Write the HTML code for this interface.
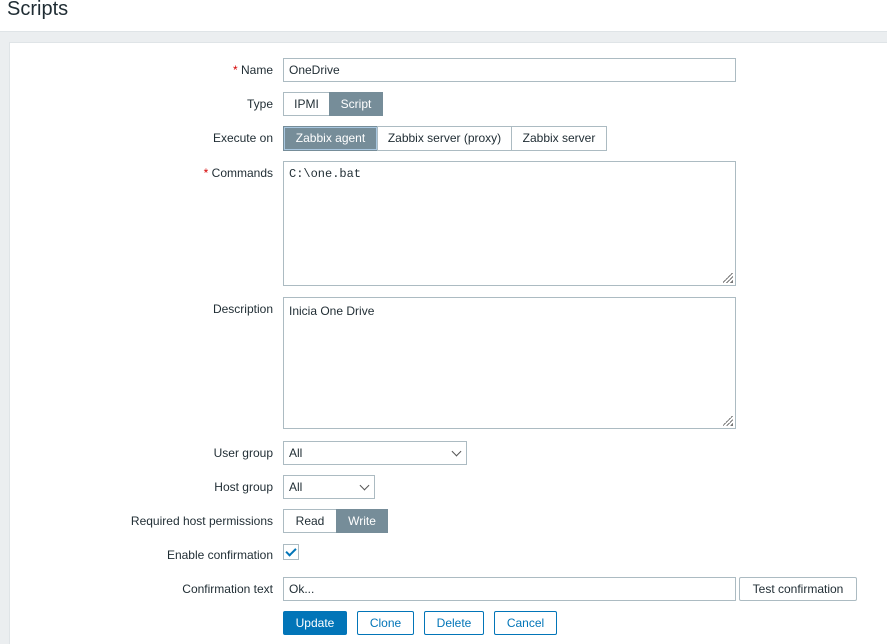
<!DOCTYPE html><html><head><style>
body{margin:0;width:887px;height:644px;background:#ebeef0;font-family:"Liberation Sans",sans-serif;font-size:12px;color:#1f2c33;position:relative;overflow:hidden}
.hdr{position:absolute;left:0;top:0;width:887px;height:31px;background:#fff;border-bottom:1px solid #dfe4e7}
.hdr h1{margin:0;position:absolute;left:7px;top:-2px;font-size:20px;font-weight:normal;color:#1f2c33}
.panel{position:absolute;left:9px;top:42px;right:0;bottom:0;background:#fff;border:1px solid #dfe4e7;border-right:none;border-bottom:none}
.l{position:absolute;right:614px;text-align:right;white-space:nowrap}
.r{color:#d40000}
.in{position:absolute;box-sizing:border-box;border:1px solid #acbbc2;background:#fff;padding:0 5px;white-space:nowrap}
.b{position:absolute;box-sizing:border-box;border:1px solid #acbbc2;background:#fff;text-align:center}
.s{background:#768d99;color:#fff;border-color:#768d99}
.bt{position:absolute;box-sizing:border-box;border:1px solid #0275b8;color:#0275b8;background:#fff;text-align:center;height:24px;line-height:22px;border-radius:2px}
.dd{position:absolute;width:6px;height:6px;border-right:1.3px solid #555;border-bottom:1.3px solid #555;transform:rotate(45deg)}
.rs{position:absolute;right:2px;bottom:2px;width:10px;height:10px;background:linear-gradient(135deg,transparent 45%,#777 45%,#777 52%,transparent 52%,transparent 65%,#777 65%,#777 72%,transparent 72%,transparent 85%,#777 85%)}
</style></head><body>
<div class="hdr"><h1>Scripts</h1></div>
<div class="panel"></div>
<div class="l" style="top:63px"><span class="r">*</span> Name</div>
<div class="in" style="left:283px;top:58px;width:453px;height:24px;line-height:22px">OneDrive</div>
<div class="l" style="top:97px">Type</div>
<div class="b" style="left:283px;top:92px;width:47px;height:24px;line-height:22px">IPMI</div>
<div class="b s" style="left:329px;top:92px;width:54px;height:24px;line-height:22px">Script</div>
<div class="l" style="top:131px">Execute on</div>
<div class="b s" style="left:283px;top:126px;width:95px;height:25px;line-height:23px;box-shadow:0 0 0 1px #a9c7e0 inset">Zabbix agent</div>
<div class="b" style="left:377px;top:126px;width:135px;height:25px;line-height:23px">Zabbix server (proxy)</div>
<div class="b" style="left:511px;top:126px;width:96px;height:25px;line-height:23px">Zabbix server</div>
<div class="l" style="top:166px"><span class="r">*</span> Commands</div>
<div class="in" style="left:283px;top:161px;width:453px;height:125px;padding-top:5px;font-family:'Liberation Mono',monospace;font-size:12px">C:\one.bat<div class="rs"></div></div>
<div class="l" style="top:302px">Description</div>
<div class="in" style="left:283px;top:297px;width:453px;height:132px;padding-top:6px">Inicia One Drive<div class="rs"></div></div>
<div class="l" style="top:446px">User group</div>
<div class="in" style="left:283px;top:441px;width:184px;height:24px;line-height:22px">All</div><div class="dd" style="left:453px;top:448px"></div>
<div class="l" style="top:480px">Host group</div>
<div class="in" style="left:283px;top:475px;width:92px;height:24px;line-height:22px">All</div><div class="dd" style="left:361px;top:482px"></div>
<div class="l" style="top:514px">Required host permissions</div>
<div class="b" style="left:283px;top:509px;width:54px;height:24px;line-height:22px">Read</div>
<div class="b s" style="left:336px;top:509px;width:52px;height:24px;line-height:22px">Write</div>
<div class="l" style="top:548px">Enable confirmation</div>
<div class="in" style="left:283px;top:544px;width:16px;height:16px;padding:0"></div>
<div style="position:absolute;left:288px;top:546px;width:4px;height:8px;border-right:2px solid #0275b8;border-bottom:2px solid #0275b8;transform:rotate(45deg)"></div>
<div class="l" style="top:582px">Confirmation text</div>
<div class="in" style="left:283px;top:577px;width:453px;height:24px;line-height:22px">Ok...</div>
<div class="b" style="left:739px;top:577px;width:118px;height:24px;line-height:22px;border-radius:2px">Test confirmation</div>
<div class="bt" style="left:283px;top:611px;width:64px;background:#0275b8;color:#fff">Update</div>
<div class="bt" style="left:357px;top:611px;width:57px">Clone</div>
<div class="bt" style="left:424px;top:611px;width:60px">Delete</div>
<div class="bt" style="left:494px;top:611px;width:63px">Cancel</div>
</body></html>
